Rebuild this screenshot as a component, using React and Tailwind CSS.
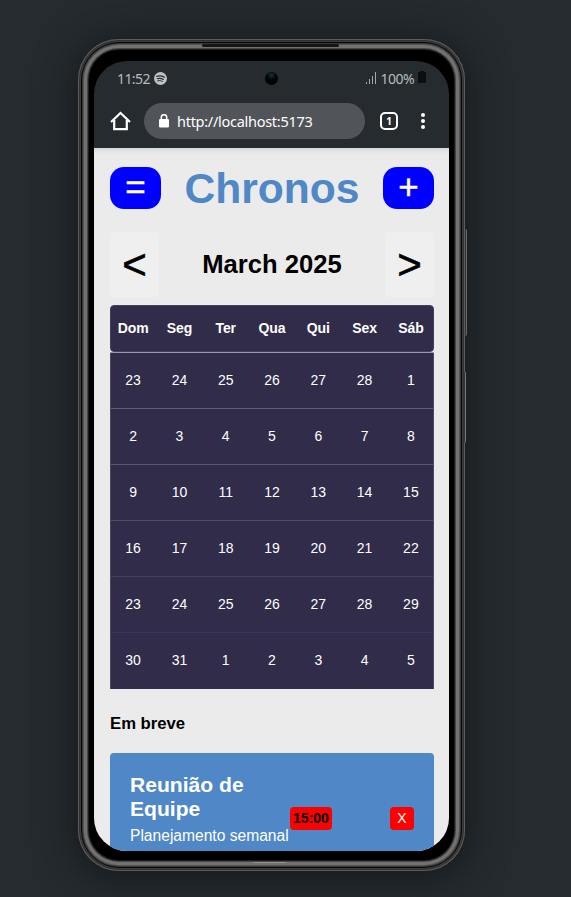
const weekdays = ['Dom', 'Seg', 'Ter', 'Qua', 'Qui', 'Sex', 'Sáb'];

const weeks = [
  { days: [23, 24, 25, 26, 27, 28, 1], line: 'border-[#625e78]' },
  { days: [2, 3, 4, 5, 6, 7, 8], line: 'border-[#5b5772]' },
  { days: [9, 10, 11, 12, 13, 14, 15], line: 'border-[#514d68]' },
  { days: [16, 17, 18, 19, 20, 21, 22], line: 'border-[#454159]' },
  { days: [23, 24, 25, 26, 27, 28, 29], line: 'border-[#3a3655]' },
  { days: [30, 31, 1, 2, 3, 4, 5], line: 'border-[#302c49]' },
];

function StatusBar() {
  return (
    <div className="relative flex h-[35px] items-center justify-between pl-[23px] pr-[23px] font-['Noto_Sans',sans-serif] text-[14px] text-[#b9bbbd]">
      <div className="flex items-center gap-[4px]">
        <span className="tracking-[-0.6px]">11:52</span>
        <svg width="13" height="13" viewBox="0 0 14 14" fill="none" stroke="#252b2f" strokeLinecap="round">
          <circle cx="7" cy="7" r="7" fill="#bfc1c2" stroke="none" />
          <path d="M3 4.7c2.8-.8 5.7-.5 8 .8" strokeWidth="1.4" />
          <path d="M3.4 7.2c2.3-.6 4.7-.4 6.7.8" strokeWidth="1.2" />
          <path d="M3.8 9.5c1.9-.5 3.7-.3 5.3.6" strokeWidth="1" />
        </svg>
      </div>
      <div className="absolute left-[171px] top-[11px] size-[13px] rounded-full bg-[radial-gradient(circle_at_50%_25%,#12383c_0px,#040707_4px,#000_7px)]" />
      <div className="flex items-center">
        <svg className="mb-[2px]" width="11" height="12" viewBox="0 0 11 12" fill="#a5a8aa">
          <path d="M0 10h1v2H0zM3 7h1v5H3zM6 4h1v8H6zM9 0h1v12H9z" />
        </svg>
        <span className="ml-[4px] tracking-[-0.55px]">100%</span>
        <svg className="ml-[4px] mb-[3px]" width="8" height="12" viewBox="0 0 8 12" fill="#0c0e10">
          <path d="M2 0h4v1h1.2q.8 0 .8.8V12H0V1.800q0-.8.8-.8H2z" />
        </svg>
      </div>
    </div>
  );
}

function AddressBar() {
  return (
    <div className="flex h-[52px] items-center pl-[16px] pb-[2px]">
      <svg width="21" height="20" viewBox="0 0 21 20" fill="none" stroke="white" strokeWidth="2.2">
        <path d="M1 11 10.500 2 20 11M4.200 9v9.200h12.600V9" />
      </svg>
      <div className="ml-[13px] flex h-[36px] w-[221px] items-center rounded-full bg-[#515459] pl-[15px]">
        <svg className="mb-px" width="10" height="14" viewBox="0 0 10 14">
          <path d="M2.300 6V3.400a2.700 2.700 0 0 1 5.400 0V6" fill="none" stroke="white" strokeWidth="1.500" />
          <rect y="5" width="10" height="8.500" rx="1.200" fill="white" />
        </svg>
        <span className="ml-[8px] whitespace-nowrap font-['Noto_Sans',sans-serif] text-[14.5px] leading-[20px] tracking-[-0.28px] text-white">http://localhost:5173</span>
      </div>
      <div className="ml-[15px] flex size-[18px] items-center justify-center rounded-[5px] border-2 border-white font-['Noto_Sans',sans-serif] text-[10px] font-bold leading-none text-white">1</div>
      <div className="ml-[23px] flex flex-col gap-[2px]">
        <span className="size-[4px] rounded-full bg-white" />
        <span className="size-[4px] rounded-full bg-white" />
        <span className="size-[4px] rounded-full bg-white" />
      </div>
    </div>
  );
}

function Calendar() {
  return (
    <section className="mt-[8px] text-[14px] text-white">
      <div className="grid h-[47px] grid-cols-[repeat(7,46.300px)] items-center justify-center rounded-[4px] border border-[#44405c] bg-[#302c49] text-center font-bold tracking-[-0.1px]">
        {weekdays.map((d) => <span key={d}>{d}</span>)}
      </div>
      <div className="h-px bg-[#9b99a7]" />
      <div className="border-x border-[#4c4862]">
        {weeks.map((w, i) => (
          <div key={i} className={`grid h-[56px] grid-cols-[repeat(7,46.300px)] items-center justify-center border-b bg-[#302c49] text-center ${w.line}`}>
            {w.days.map((d) => <span key={d}>{d}</span>)}
          </div>
        ))}
      </div>
    </section>
  );
}

export default function App() {
  return (
    <div className="h-[897px] w-[571px] overflow-hidden bg-[#252b2f] pl-[78px] pt-[39px] font-['Liberation_Sans',Arial,sans-serif]">
      <div className="relative h-[832px] w-[387px] rounded-[41px] bg-black pl-[16px] pt-[22px] shadow-[inset_0_0_0_1px_#5c5c5c,inset_0_0_0_2px_#303030,inset_0_0_0_3px_#3c3c3c,inset_0_0_0_4px_#080808,inset_0_0_0_5px_#383838,inset_0_0_0_6px_#555,inset_0_0_0_9px_#727272,inset_0_0_0_10px_#474747,inset_0_0_0_11px_#1d1d1d,0_4px_36px_6px_#171b1e]">
        <div className="absolute left-[124px] top-[5px] h-[3px] w-[137px] rounded-full bg-[#151515]" />
        <div className="absolute bottom-[8px] left-[176px] h-px w-[32px] rounded-full bg-[#929292]" />
        <div className="absolute -right-[2px] top-[190px] h-[107px] w-[2px] rounded-r-sm border-r border-[#666] bg-[#333]" />
        <div className="absolute -right-[1px] top-[332px] h-[72px] w-[2px] rounded-r-sm border-r border-[#777] bg-[#333]" />
        <div className="h-[790px] w-[355px] overflow-hidden rounded-[33px] bg-[#252b2f]">
          <StatusBar />
          <AddressBar />
          <main className="h-[703px] overflow-hidden bg-[#ebebeb] pl-[16px] pr-[15px] pt-[19px] shadow-[inset_0_5px_5px_-3px_#d2d2d2]">
            <header className="flex h-[42px] items-center justify-between">
              <button className="flex h-[42px] w-[51px] items-center justify-center rounded-[14px] bg-[#0000ff] pb-[3px] text-[35px] leading-none text-white [-webkit-text-stroke:0.500px_white]">=</button>
              <h1 className="text-[42.600px] font-bold leading-none text-[#4f87c7]">Chronos</h1>
              <button className="flex h-[42px] w-[51px] items-center justify-center rounded-[14px] bg-[#0000ff] pb-[3px] text-[35px] leading-none text-white [-webkit-text-stroke:0.500px_white]">+</button>
            </header>
            <nav className="mt-[23px] flex h-[65px] items-center justify-between">
              <button className="h-[65px] w-[49px] rounded-[4px] bg-[#efefef] text-[42px] leading-none text-black [-webkit-text-stroke:0.600px_black]">&lt;</button>
              <h2 className="text-[25.600px] font-bold text-black">March 2025</h2>
              <button className="h-[65px] w-[49px] rounded-[4px] bg-[#efefef] text-[42px] leading-none text-black [-webkit-text-stroke:0.600px_black]">&gt;</button>
            </nav>
            <Calendar />
            <h3 className="mt-[23px] text-[16.700px] font-bold leading-[24px] text-black">Em breve</h3>
            <article className="mt-[17px] flex h-[130px] rounded-[4px] bg-[#4f87c7] px-[20px] pt-[20px] text-white">
              <div className="w-[160px]">
                <h4 className="w-[130px] text-[21.100px] font-bold leading-[24px]">Reunião de Equipe</h4>
                <p className="mt-[5px] whitespace-nowrap text-[15.600px] leading-[20px]">Planejamento semanal</p>
              </div>
              <div className="mt-[34px] flex h-[23px] flex-1 justify-between text-[14px]">
                <span className="flex w-[42px] items-center justify-center rounded-[4px] bg-[#ff0000] font-bold text-black">15:00</span>
                <button className="w-[24px] rounded-[4px] bg-[#ff0000]">X</button>
              </div>
            </article>
          </main>
        </div>
      </div>
    </div>
  );
}
